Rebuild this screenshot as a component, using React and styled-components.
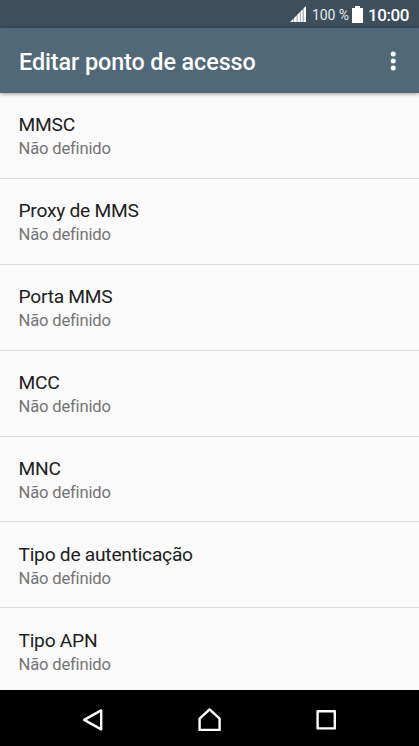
import React from 'react';
import styled, { createGlobalStyle } from 'styled-components';

const settings = ['MMSC', 'Proxy de MMS', 'Porta MMS', 'MCC', 'MNC', 'Tipo de autenticação', 'Tipo APN'];

const App = () => {
  return (
    <Screen>
      <GlobalStyle />
      <StatusBar>
        <SignalIcon viewBox="0 0 16 16">
          <path d="M0 16L3.6 12.4V16zM4 16v-4L6.8 9.2V16zM7.3 16V8.7l2.6-2.6V16zM10.4 16V5.6l2.4-2.4V16zM13.4 16V2.6L16 0v16z" />
        </SignalIcon>
        <Percent>100 %</Percent>
        <BatteryIcon viewBox="0 0 11 17">
          <path d="M3 0h5v2h3v15H0V2h3z" />
        </BatteryIcon>
        <Clock>10:00</Clock>
      </StatusBar>
      <Toolbar>
        <Title>Editar ponto de acesso</Title>
        <MenuIcon viewBox="0 0 6 20">
          <circle cx="3.2" cy="3" r="2.5" />
          <circle cx="3.2" cy="10" r="2.5" />
          <circle cx="3.2" cy="17" r="2.5" />
        </MenuIcon>
      </Toolbar>
      <List>
        {settings.map((name) => (
          <Row key={name}>
            <Name>{name}</Name>
            <Value>Não definido</Value>
          </Row>
        ))}
      </List>
      <NavBar>
        <NavIcon viewBox="0 0 28 28">
          <path d="M22.2 4.4v19L5.2 13.9z" />
        </NavIcon>
        <NavIcon viewBox="0 0 28 28">
          <path d="M13.6 3.4L3.6 12.6v11.3h20V12.6z" />
        </NavIcon>
        <NavIcon viewBox="0 0 28 28">
          <path d="M4.6 5.2h17.2v17.2H4.6z" />
        </NavIcon>
      </NavBar>
    </Screen>
  );
};

const GlobalStyle = createGlobalStyle`
  body {
    margin: 0;
    font-family: Roboto, sans-serif;
  }
`;

const Screen = styled.div`
  display: flex;
  flex-direction: column;
  width: 419px;
  height: 746px;
  overflow: hidden;
  background: #fafafa;
`;

const StatusBar = styled.div`
  display: flex;
  align-items: center;
  justify-content: flex-end;
  flex: none;
  height: 28px;
  padding-right: 10px;
  box-sizing: border-box;
  color: white;
  background: #3d4e5c;
`;

const SignalIcon = styled.svg`
  width: 16px;
  height: 16px;
  margin-right: 6px;
  fill: white;
`;

const Percent = styled.span`
  width: 37px;
  margin-right: 3px;
  padding-top: 1px;
  font-size: 14px;
  letter-spacing: -0.1px;
  white-space: nowrap;
  color: #e8ebed;
`;

const BatteryIcon = styled.svg`
  width: 11px;
  height: 17px;
  margin-right: 5px;
  fill: white;
`;

const Clock = styled.span`
  width: 41px;
  padding-top: 1px;
  font-size: 17px;
  font-weight: 500;
  letter-spacing: -0.4px;
`;

const Toolbar = styled.header`
  display: flex;
  align-items: center;
  justify-content: space-between;
  flex: none;
  height: 65px;
  padding: 0 23px 0 19px;
  box-sizing: border-box;
  color: white;
  background: #506878;
  box-shadow: 0 1px 4px rgba(0, 0, 0, 0.4);
  z-index: 1;
`;

const Title = styled.h1`
  margin: 0;
  padding-top: 2px;
  font-size: 23.4px;
  font-weight: 500;
  letter-spacing: -0.1px;
`;

const MenuIcon = styled.svg`
  width: 6px;
  height: 20px;
  fill: white;
`;

const List = styled.main`
  flex: 1;
  min-height: 0;
  overflow: hidden;
`;

const Row = styled.div`
  height: 85.9px;
  padding: 20.4px 19px 0 18.5px;
  box-sizing: border-box;
  border-bottom: 1px solid #dcdcdc;
`;

const Name = styled.div`
  font-size: 19.2px;
  line-height: 24px;
  letter-spacing: -0.25px;
  color: #212121;
`;

const Value = styled.div`
  font-size: 16.6px;
  line-height: 24px;
  letter-spacing: -0.18px;
  color: #757575;
`;

const NavBar = styled.nav`
  display: flex;
  align-items: center;
  justify-content: center;
  gap: 89px;
  flex: none;
  height: 56px;
  padding-top: 3px;
  box-sizing: border-box;
  background: black;
`;

const NavIcon = styled.svg`
  width: 28px;
  height: 28px;
  fill: none;
  stroke: white;
  stroke-width: 2.4;
  stroke-linejoin: round;
`;

export default App;
